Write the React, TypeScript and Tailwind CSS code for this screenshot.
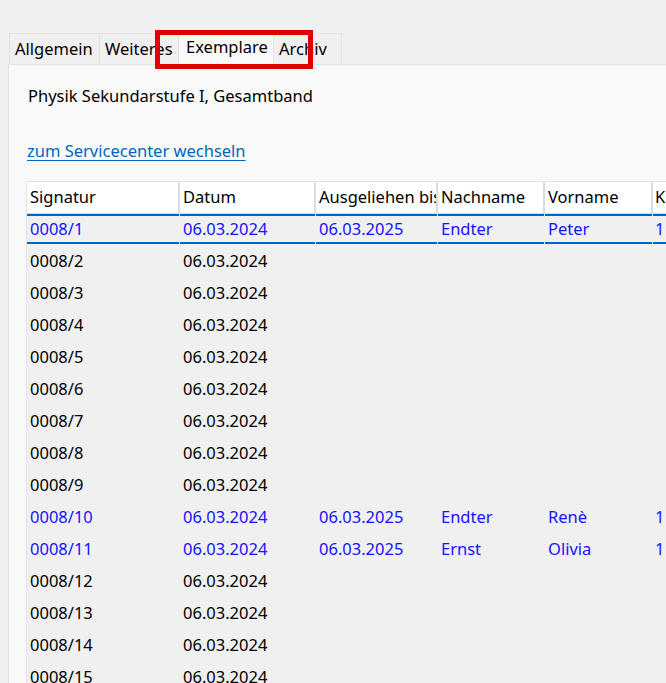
import React from "react";

type Row = {
  sig: string;
  datum: string;
  bis?: string;
  nach?: string;
  vor?: string;
  k?: string;
  active?: boolean;
};

const rows: Row[] = [
  { sig: "0008/1", datum: "06.03.2024", bis: "06.03.2025", nach: "Endter", vor: "Peter", k: "1", active: true },
  ...Array.from({ length: 8 }, (_, i) => ({ sig: `0008/${i + 2}`, datum: "06.03.2024" })),
  { sig: "0008/10", datum: "06.03.2024", bis: "06.03.2025", nach: "Endter", vor: "Renè", k: "1", active: true },
  { sig: "0008/11", datum: "06.03.2024", bis: "06.03.2025", nach: "Ernst", vor: "Olivia", k: "1", active: true },
  ...Array.from({ length: 4 }, (_, i) => ({ sig: `0008/${i + 12}`, datum: "06.03.2024" })),
];

// column widths incl. the 2px separator on the right
const cols = [
  { label: "Signatur", w: "w-[153px]", pad: "pl-[3px]" },
  { label: "Datum", w: "w-[136px]", pad: "pl-[3px]" },
  { label: "Ausgeliehen bis", w: "w-[122px]", pad: "pl-[3px]" },
  { label: "Nachname", w: "w-[107px]", pad: "pl-[3px]" },
  { label: "Vorname", w: "w-[108px]", pad: "pl-[3px]" },
  { label: "Klasse", w: "w-[60px]", pad: "pl-[2px]" },
];

const tabs = [
  { label: "Allgemein", w: "w-[91px]", pad: "pl-[5px]" },
  { label: "Weiteres", w: "w-[80px]", pad: "pl-[5px]" },
  { label: "Exemplare", w: "w-[96px]", pad: "pl-[7px]", selected: true },
  { label: "Archiv", w: "w-[69px]", pad: "pl-[5px]" },
];

function Cell({ i, children, sel }: { i: number; children?: React.ReactNode; sel?: boolean }) {
  const c = cols[i];
  return (
    <div className={`${c.w} shrink-0 pr-[1px]`}>
      <div
        className={`h-[30px] flex items-center whitespace-nowrap overflow-hidden ${c.pad} ${
          sel ? "border-y-2 border-[#0067c0]" : ""
        }`}
      >
        {children}
      </div>
    </div>
  );
}

export default function App() {
  return (
    <div
      className="relative w-[666px] h-[683px] overflow-hidden bg-[#f0f0f0] text-[16.5px] text-black"
      style={{ fontFamily: '"Noto Sans", "Open Sans", sans-serif' }}
    >
      {/* tab strip */}
      <div className="flex pl-[9px] pt-[33px]">
        {tabs.map((t) => (
          <div
            key={t.label}
            className={`${t.w} ${t.pad} flex items-center border-t border-l border-r border-[#e3e3e3] -mr-px whitespace-nowrap overflow-hidden ${
              t.selected ? "bg-[#f9f9f9] -mt-[2px] h-[33px] pb-[2px] z-10" : "h-[31px] bg-[#f0f0f0]"
            }`}
          >
            {t.label}
          </div>
        ))}
      </div>

      {/* panel */}
      <div className="ml-[8px] h-[640px] bg-[#f9f9f9] border-t border-l border-[#e3e3e3] pl-[17px] pt-[18px]">
        <div className="h-[26px] leading-[26px] pl-[2px]">Physik Sekundarstufe I, Gesamtband</div>
        <div className="mt-[29px] h-[26px] leading-[26px] pl-px">
          <a className="text-[#0067c0] underline underline-offset-[3px]">zum Servicecenter wechseln</a>
        </div>

        {/* grid */}
        <div className="mt-[17px] border-t border-l border-[#e3e3e3] bg-[#f0f0f0]">
          <div className="flex h-[32px] bg-white border-b border-[#d9d9d9]">
            {cols.map((c) => (
              <div
                key={c.label}
                className={`${c.w} shrink-0 flex items-center overflow-hidden whitespace-nowrap border-r-2 border-[#dcdcdc] ${c.pad}`}
              >
                {c.label}
              </div>
            ))}
          </div>
          {rows.map((r, idx) => {
            const sel = idx === 0;
            const tone = r.active ? "text-[#1414ff]" : "text-black";
            return (
              <div key={r.sig} className={`flex h-[32px] ${tone}`}>
                <Cell i={0} sel={sel}>{r.sig}</Cell>
                <Cell i={1} sel={sel}>{r.datum}</Cell>
                <Cell i={2} sel={sel}>{r.bis}</Cell>
                <Cell i={3} sel={sel}>{r.nach}</Cell>
                <Cell i={4} sel={sel}>{r.vor}</Cell>
                <Cell i={5} sel={sel}>{r.k}</Cell>
              </div>
            );
          })}
        </div>
      </div>

      {/* red annotation box */}
      <div className="absolute left-[155px] top-[30px] w-[158px] h-[39px] border-[5px] border-[#e00000] z-20" />
    </div>
  );
}
